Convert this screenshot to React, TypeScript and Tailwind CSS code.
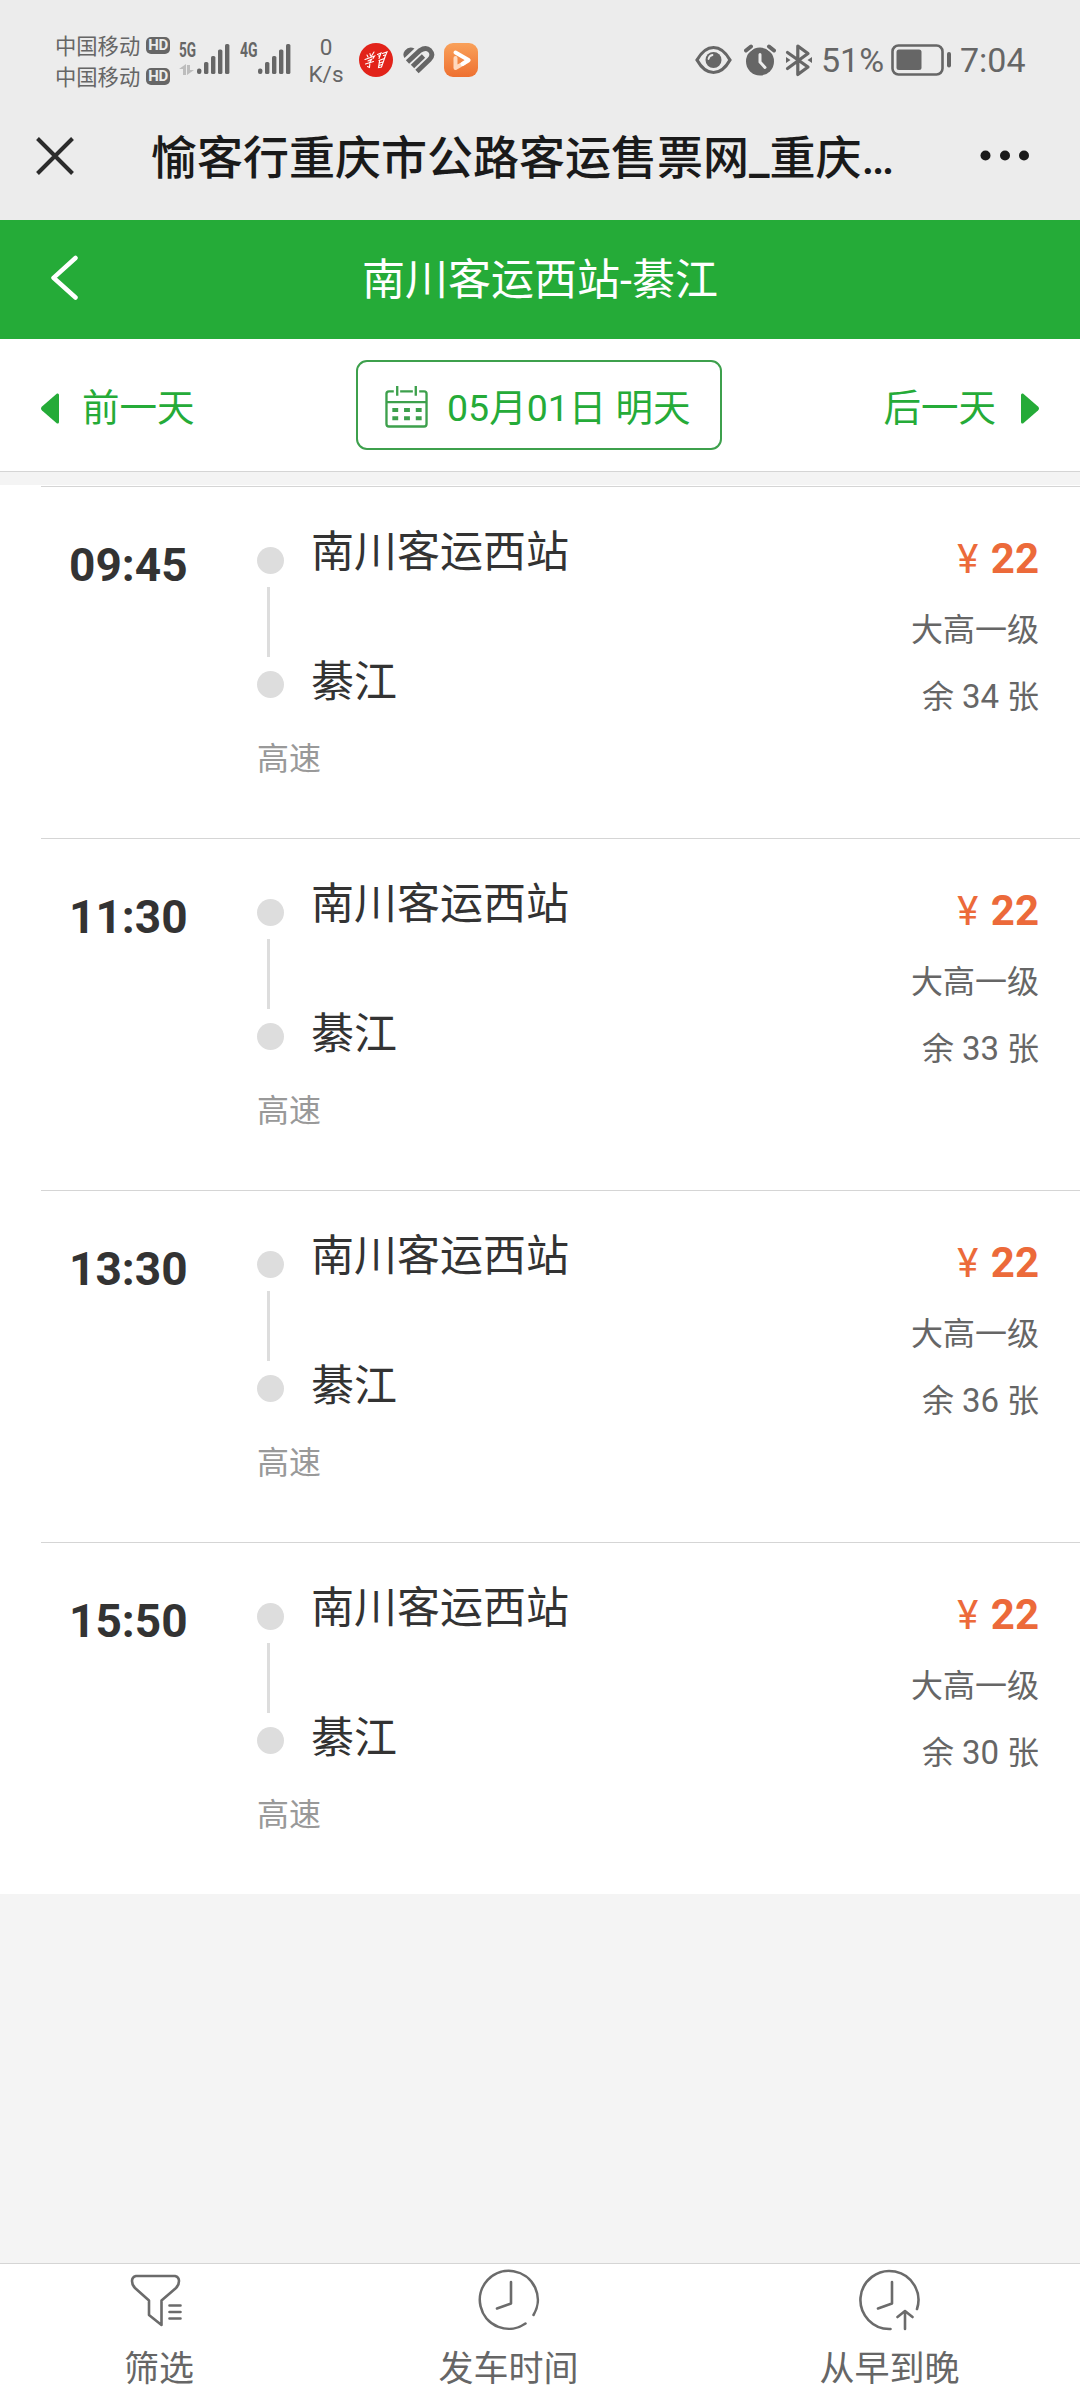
import type { ReactNode } from "react";

const trips = [
  { time: "09:45", left: 34 },
  { time: "11:30", left: 33 },
  { time: "13:30", left: 36 },
  { time: "15:50", left: 30 },
];

function SignalBars() {
  return (
    <svg className="w-[34px] h-[32px]" viewBox="0 0 34 32" fill="#666">
      <rect x="0" y="25.5" width="4.4" height="5.5" rx="2" />
      <rect x="7" y="19" width="4.4" height="12" rx="1.6" />
      <rect x="14" y="13" width="4.4" height="18" rx="1.6" />
      <rect x="21" y="6.5" width="4.4" height="24.5" rx="1.6" />
      <rect x="28" y="1" width="4.4" height="30" rx="1.6" />
    </svg>
  );
}

function Carrier() {
  return (
    <div className="flex items-start h-[31px]">
      <span className="w-[91px] text-[21.3px] leading-[33px] whitespace-nowrap">中国移动</span>
      <span className="w-6 h-[17px] mt-[7px] rounded-[5px] bg-[#666] text-[#ececec] text-[15px] leading-[17px] font-bold text-center tracking-tight">
        HD
      </span>
    </div>
  );
}

function StatusBar() {
  return (
    <div className="flex h-[110px] pt-[30px] text-[#666]">
      <div className="w-[124px] ml-[55px]">
        <Carrier />
        <Carrier />
      </div>
      {/* 5G */}
      <div className="w-[18px] pt-[10px]">
        <div className="text-[20px] leading-[20px] font-bold origin-left scale-x-[0.68]">5G</div>
        <svg className="w-[16px] h-[12px] mt-[4px]" viewBox="0 0 16 12" fill="#bdbdbd">
          <path d="M7 11H4V5H0L7 0zM8 1h3v5h4l-7 5z" />
        </svg>
      </div>
      <div className="w-[43px] pt-[13px]">
        <SignalBars />
      </div>
      {/* 4G */}
      <div className="w-[18px] pt-[10px]">
        <div className="text-[20px] leading-[20px] font-bold origin-left scale-x-[0.7]">4G</div>
      </div>
      <div className="w-[48px] pt-[13px]">
        <SignalBars />
      </div>
      <div className="w-[40px] pt-[4px] text-center text-[22.5px] leading-[27px]">
        <div>0</div>
        <div>K/s</div>
      </div>
      <svg className="w-[34px] h-[34px] mt-[13px] ml-[13px]" viewBox="0 0 34 34">
        <circle cx="17" cy="17" r="17" fill="#e2231a" />
        <g fill="none" stroke="#fff" strokeWidth="1.1" strokeLinecap="round">
          <path d="M8 12l1 2M11 10.500l.5 2.500M15 9l-2.500 4M6 16.500l9.500-3.500-1.500 2.500M9 18l4-2-2.500 3.500M6.500 21l8-2.500M11 19l-.5 5.500-2-1" />
          <path d="M18.500 11.500l3.500-1.500-2 5.500M19.500 13l1.500-.5M23.500 10.500l4.500-1.500-2.500 6M24.500 12.500l1.500-.5M20 17.500l5.500-2-3 8.500-3 .5 1-6.500M20.500 20l3-1M20 22.500l3-1" />
        </g>
      </svg>
      <svg className="w-[32px] h-[28px] mt-[16px] ml-[10px]" viewBox="0 0 32 28" fill="none" stroke="#666" strokeWidth="4.8">
        <path d="M1.500 12Q-1 8 2 4.500Q6-.5 11.500 2.500z" fill="#666" stroke="none" />
        <path d="M4.500 16L17 4.500Q23 .5 27 4.500Q31 9 26.500 13.500L14 25.500" />
        <path d="M9.500 20.500L20.500 10" />
      </svg>
      <svg className="w-[34px] h-[34px] mt-[13px] ml-[9px]" viewBox="0 0 34 34">
        <defs>
          <linearGradient id="play" x1="0" y1="0" x2="0" y2="1">
            <stop offset="0" stopColor="#f9a15a" />
            <stop offset="1" stopColor="#ee7030" />
          </linearGradient>
        </defs>
        <rect width="34" height="34" rx="9" fill="url(#play)" />
        <path d="M11.500 15v10L24.500 17.500" fill="none" stroke="#ffd9bd" strokeWidth="4" strokeLinejoin="round" strokeLinecap="round" />
        <path d="M11.500 9.500L24.500 17l-6 4" fill="none" stroke="#fff" strokeWidth="4" strokeLinejoin="round" strokeLinecap="round" />
      </svg>

      {/* 右侧图标 */}
      <svg className="w-[37px] h-[30px] mt-[15px] ml-[217px]" viewBox="0 0 37 30">
        <path d="M2 15Q9 2.500 18.500 2.500T35 15Q28 27.500 18.500 27.500T2 15z" fill="none" stroke="#666" strokeWidth="3.200" />
        <circle cx="18.500" cy="15" r="8" fill="#666" />
        <path d="M13.500 14a5 5 0 0 1 4-4" fill="none" stroke="#ececec" strokeWidth="1.800" strokeLinecap="round" />
      </svg>
      <svg className="w-[32px] h-[32px] mt-[14px] ml-[12px]" viewBox="0 0 32 32">
        <circle cx="16" cy="17.500" r="14" fill="#666" />
        <path d="M2 6.500L7 2.500M30 6.500L25 2.500" stroke="#ececec" strokeWidth="7" strokeLinecap="round" />
        <path d="M2 6.500L7 2.500M30 6.500L25 2.500" stroke="#666" strokeWidth="4" strokeLinecap="round" />
        <path d="M16 10.500V18l5 5.500" fill="none" stroke="#ececec" strokeWidth="3" strokeLinecap="round" />
      </svg>
      <svg className="w-[28px] h-[34px] mt-[13px] ml-[9px]" viewBox="0 0 28 34">
        <path d="M2.500 9.500L23 24 12.800 31.500V3L23 10.500 2.500 25.500" fill="none" stroke="#666" strokeWidth="3.200" strokeLinejoin="round" strokeLinecap="round" />
        <path d="M1 14l4.500 3L1 20zM27 14l-4.500 3 4.500 3z" fill="#666" />
      </svg>
      <div className="w-[69px] pl-[8px] text-[34px] leading-[34px] mt-[13px]">51%</div>
      <svg className="w-[61px] h-[32px] mt-[14px] ml-[9px]" viewBox="0 0 61 32">
        <rect x="1.500" y="1.500" width="50" height="29" rx="6" fill="none" stroke="#666" strokeWidth="2.600" />
        <rect x="5.500" y="5.500" width="25" height="20.500" rx="2.500" fill="#666" />
        <rect x="56" y="8" width="4" height="15.500" rx="2" fill="#666" />
      </svg>
      <div className="text-[34px] leading-[34px] mt-[13px] ml-[8px]">7:04</div>
    </div>
  );
}

function TitleBar() {
  return (
    <div className="flex h-[110px] pt-[20px]">
      <svg className="w-[38px] h-[38px] mt-[7px] ml-[36px]" viewBox="0 0 38 38">
        <path d="M1.500 1.500l35 35M36.500 1.500l-35 35" stroke="#2b2b2b" strokeWidth="4" />
      </svg>
      <h1 className="w-[750px] ml-[77px] text-[46px] leading-[56px] font-medium text-[#1a1a1a] whitespace-nowrap">
        愉客行重庆市公路客运售票网_重庆…
      </h1>
      <svg className="w-[50px] h-[12px] mt-[20px] ml-[79px]" viewBox="0 0 50 12" fill="#1a1a1a">
        <circle cx="5.500" cy="5.500" r="5" />
        <circle cx="25" cy="5.500" r="5" />
        <circle cx="44" cy="5.500" r="5" />
      </svg>
    </div>
  );
}

function DateBar() {
  return (
    <div className="flex items-center justify-between h-[133px] px-[41px] bg-white border-b border-[#d5d5d5] text-[#25ab38] text-[37.5px] leading-[40px]">
      <div className="flex items-center">
        <svg className="w-[18px] h-[31px] mt-[6px]" viewBox="0 0 18 31" fill="#25ab38">
          <path d="M18 2v27q0 2-2 1.500L1 17.500q-2-2 0-4L16 .5q2-.5 2 1.500z" />
        </svg>
        <span className="ml-[23px] pt-[5px]">前一天</span>
      </div>
      <div className="flex items-center w-[366px] h-[90px] pl-[27px] border-2 border-[#3da04c] rounded-[11px] whitespace-nowrap">
        <svg className="w-[43px] h-[43px] mt-[2px]" viewBox="0 0 44 44" fill="none" stroke="#3da04c" strokeWidth="2.400">
          <path d="M9 6.500H4a2.500 2.500 0 0 0-2.500 2.500v31a2.500 2.500 0 0 0 2.500 2.500h36a2.500 2.500 0 0 0 2.500-2.500V9a2.500 2.500 0 0 0-2.500-2.500h-5M15.500 6.500h13M1.500 17.500h41M12.500 1v10M31.500 1v10" />
          <path d="M7.500 25.500h6M19.500 25.500h6M31.500 25.500h6M7.500 34h6M19.500 34h6M31.500 34h6" strokeWidth="4" />
        </svg>
        <span className="ml-[19px] pt-[5px]">05月01日 明天</span>
      </div>
      <div className="flex items-center">
        <span className="mr-[25px] pt-[5px]">后一天</span>
        <svg className="w-[18px] h-[31px] mt-[6px]" viewBox="0 0 18 31" fill="#25ab38">
          <path d="M0 2v27q0 2 2 1.500L17 17.500q2-2 0-4L2 .5Q0 0 0 2z" />
        </svg>
      </div>
    </div>
  );
}

function TripRow({ time, left }: { time: string; left: number }) {
  return (
    <div className="flex h-[352px] ml-[41px] pr-[41px] border-t border-[#d5d5d5]">
      <div className="w-[216px] pl-[28px] pt-[55px] text-[46px] leading-[46px] font-bold text-[#333]">{time}</div>
      <div className="flex-1">
        <div className="flex h-[256px]">
          <div className="w-[54px] pt-[60px]">
            <div className="w-[27px] h-[27px] rounded-full bg-[#ddd]"></div>
            <div className="w-[3px] h-[70px] ml-[10px] mt-[13px] mb-[14px] bg-[#ddd]"></div>
            <div className="w-[27px] h-[27px] rounded-full bg-[#ddd]"></div>
          </div>
          <div className="pt-[43px] text-[43px] leading-[44px] text-[#333]">
            <div className="mb-[86px]">南川客运西站</div>
            <div>綦江</div>
          </div>
        </div>
        <div className="text-[32px] leading-[32px] text-[#999]">高速</div>
      </div>
      <div className="pt-[51px] text-right text-[32px] leading-[32px] text-[#666]">
        <div className="text-[42px] leading-[42px] text-[#ec6a3a]">
          <span className="mr-[2px] text-[40px]">¥</span> <span className="font-bold">22</span>
        </div>
        <div className="mt-[33px]">大高一级</div>
        <div className="mt-[35px]">
          余 <span className="text-[33px]">{left}</span> 张
        </div>
      </div>
    </div>
  );
}

function Tab({ label, className, children }: { label: string; className: string; children: ReactNode }) {
  return (
    <button className={`flex flex-col items-center pt-[5px] text-[35px] leading-[36px] text-[#666] ${className}`}>
      <svg className="w-[62px] h-[62px]" viewBox="0 0 62 62" fill="none" stroke="#6b6b6b" strokeWidth="2.600" strokeLinecap="round" strokeLinejoin="round">
        {children}
      </svg>
      <span className="mt-[21px] whitespace-nowrap">{label}</span>
    </button>
  );
}

export default function App() {
  return (
    <div className="flex flex-col w-[1080px] h-[2388px] overflow-hidden bg-[#f4f4f4] font-[Roboto,'Noto_Sans_CJK_SC',sans-serif]">
      <header className="bg-[#ececec]">
        <StatusBar />
        <TitleBar />
      </header>

      <div className="relative flex items-center justify-center h-[119px] bg-[#25ab38] text-[43px] leading-[44px] text-white">
        <svg className="absolute left-[50px] top-[35px] w-[28px] h-[46px]" viewBox="0 0 28 46">
          <path d="M25.500 3L3.500 22.800 25.500 42.500" fill="none" stroke="#fff" strokeWidth="4.500" strokeLinecap="round" strokeLinejoin="round" />
        </svg>
        <h2>南川客运西站-綦江</h2>
      </div>

      <DateBar />

      {/* 班次列表 */}
      <main className="mt-[13px] pt-px bg-white">
        {trips.map((trip) => (
          <TripRow key={trip.time} time={trip.time} left={trip.left} />
        ))}
      </main>

      <nav className="flex h-[125px] mt-auto bg-white border-t border-[#d5d5d5]">
        <Tab label="筛选" className="w-[318px]">
          <path d="M8 7H47Q51 8 51 12Q51 16 48 19L33.500 31.500V56L21 46V31.500L7 19Q4 16 4 12Q4 8 8 7zM41.500 36.500H52.500M41.500 43H52.500M41.500 49.500H52.500" />
        </Tab>
        <Tab label="发车时间" className="w-[381px]">
          <path d="M47.500 54.500A29 29 0 1 1 55.500 46M33 13V34.500L19 39.500" />
        </Tab>
        <Tab label="从早到晚" className="w-[381px]">
          <path d="M31.500 60A29 29 0 1 1 58 40M33 13V34.500L19 39.500M46 60V42M38.500 48L46 42L53.500 48" />
        </Tab>
      </nav>
    </div>
  );
}
